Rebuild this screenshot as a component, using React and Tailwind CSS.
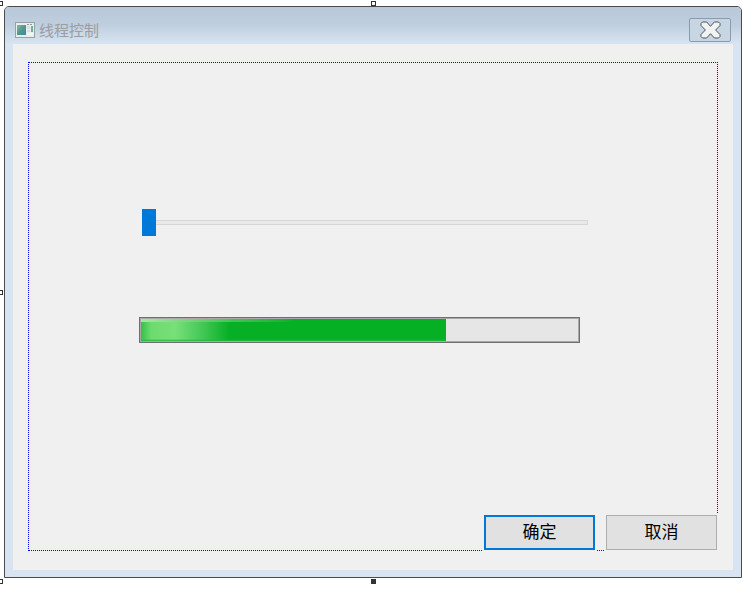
function WindowIcon() {
  return (
    <svg width="20" height="16" viewBox="0 0 20 16" className="shrink-0">
      <defs>
        <linearGradient id="pane" x1="0" y1="0" x2="1" y2="1">
          <stop offset="0" stopColor="#8fb3a6" />
          <stop offset="0.5" stopColor="#4f9a8c" />
          <stop offset="1" stopColor="#4a84a8" />
        </linearGradient>
      </defs>
      <rect x="0.5" y="0.5" width="19" height="15" fill="#e8eeec" stroke="#98a2a5" />
      <rect x="2" y="3" width="9" height="10" fill="url(#pane)" />
      <rect x="12" y="2" width="2" height="1" fill="#8b9a9c" />
      <rect x="15" y="2" width="2" height="1" fill="#8b9a9c" />
      <rect x="12" y="4" width="3" height="3" fill="#d6e0da" />
      <rect x="16" y="4" width="2" height="6" fill="#6fae98" />
      <rect x="12" y="8" width="3" height="2" fill="#d8e0da" />
      <rect x="12" y="11" width="6" height="2" fill="#f4f6f4" />
    </svg>
  );
}

function CloseGlyph() {
  return (
    <svg width="21" height="18" viewBox="0 0 21 18">
      <path
        d="M2.5 1h4.2l3.8 4.3L14.3 1h4.2L20 2.5v2L15.6 9l4.4 4.5v2L18.500 17h-4.200l-3.800-4.300L6.700 17H2.500L1 15.500v-2L5.400 9 1 4.500v-2z"
        fill="#f1f2f3"
        stroke="#4c5560"
        strokeWidth="1"
        strokeLinejoin="round"
      />
    </svg>
  );
}

export default function App() {
  return (
    <div className="relative w-[743px] h-[590px] bg-white pt-[6px] pl-[4px] overflow-hidden font-['Noto_Sans_CJK_SC','Liberation_Sans',sans-serif]">
      {/* resize handles */}
      <div className="absolute left-[-2px] top-[1px] w-[5px] h-[5px] border border-[#333] bg-white" />
      <div className="absolute left-[371px] top-[1px] w-[5px] h-[5px] border border-[#333] bg-white" />
      <div className="absolute left-[-2px] top-[290px] w-[5px] h-[5px] border border-[#333] bg-white" />
      <div className="absolute left-[-2px] top-[579px] w-[5px] h-[5px] border border-[#333] bg-white" />
      <div className="absolute left-[371px] top-[579px] w-[5px] h-[5px] bg-[#333]" />

      <div className="w-[738px] h-[572px] flex flex-col border border-[#4b4b4b] rounded-t-[5px] bg-[#d8e4f1]">
        <div className="h-[37px] shrink-0 flex items-center justify-between pl-[10px] pr-[10px] rounded-t-[4px] bg-gradient-to-b from-[#b9c8d9] via-[#c0cfdf] to-[#d7e4f2]">
          <div className="flex items-center gap-[4px] pt-[8px]">
            <WindowIcon />
            <span className="text-[15px] leading-[20px] text-[#9a9da1]">线程控制</span>
          </div>
          <div className="w-[42px] h-[24px] mt-[9px] flex items-center justify-center rounded-[2px] border border-[#8a9bb0] bg-[#c8d5e3]">
            <CloseGlyph />
          </div>
        </div>

        <div className="relative mx-[8px] h-[526px] bg-[#f0f0f0] pt-[18px] pl-[15px]">
          <div className="w-[690px] h-[489px] border border-dotted border-[#0000ff] pt-[146px] pl-[113px]">
            <div className="relative w-[446px] h-[5px] mt-[11px] border border-[#d6d6d6] bg-[#e7eaea]">
              <div className="absolute left-[-1px] top-[-12px] w-[14px] h-[27px] bg-[#0078d7]" />
            </div>

            <div className="relative w-[441px] h-[26px] mt-[92px] ml-[-3px] border border-[#6f6f6f] bg-[#e6e6e6] p-[1px] shadow-[inset_0_0_0_1px_#a9a9a9]">
              <div className="relative w-[305px] h-[22px] bg-[linear-gradient(to_right,#35c04a_0px,#6cdb6e_10px,#78e078_34px,#46c958_60px,#06b025_88px,#06b025_100%)]">
                <div className="absolute inset-x-0 top-0 h-[3px] bg-gradient-to-r from-[#a9e4a4] via-[#3fc454] via-30% to-[#06b025] to-50%" />
                <div className="absolute inset-x-0 bottom-0 h-[2px] bg-gradient-to-b from-transparent to-[#1fb83a]" />
              </div>
            </div>
          </div>

          <div className="absolute left-[471px] top-[471px] flex gap-[11px]">
            <button className="w-[111px] h-[35px] pb-[3px] border-2 border-[#0078d7] bg-[#e1e1e1] text-[17px] text-black ring-2 ring-[#f0f0f0]">确定</button>
            <button className="w-[111px] h-[35px] pb-[3px] border border-[#adadad] bg-[#e1e1e1] text-[17px] text-black ring-2 ring-[#f0f0f0]">取消</button>
          </div>
        </div>
      </div>
    </div>
  );
}
